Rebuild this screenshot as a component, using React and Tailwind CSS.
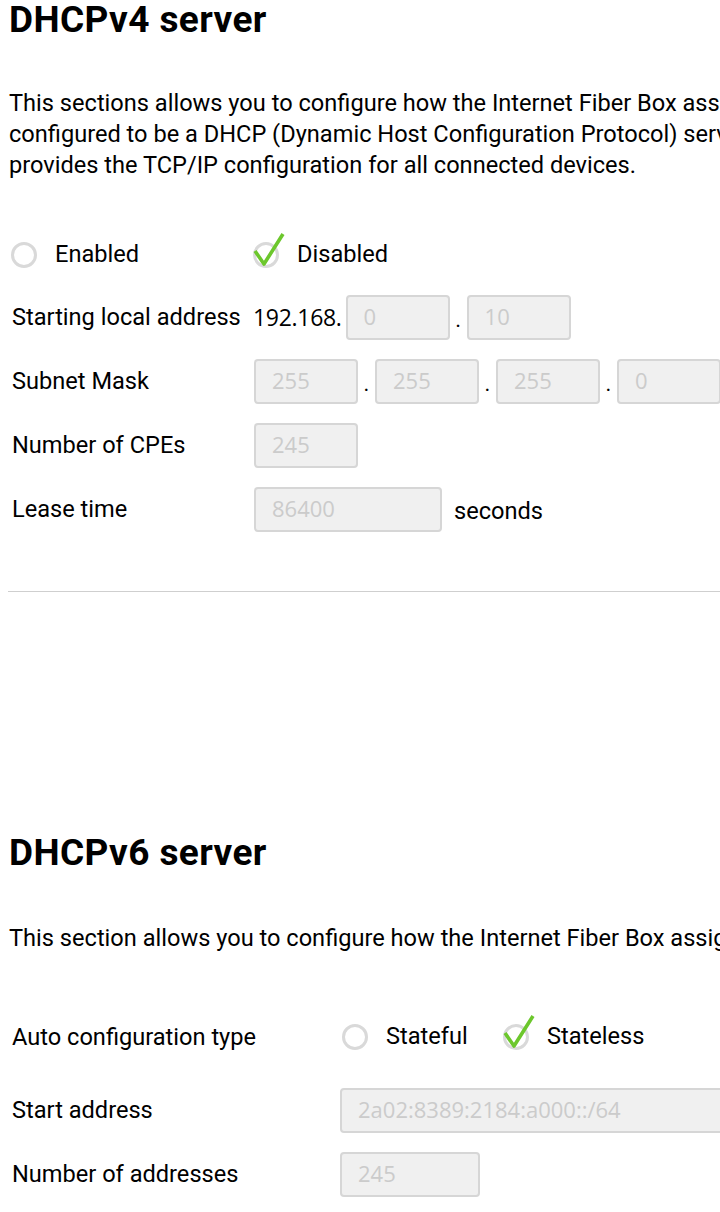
import React from 'react';

const Radio = ({ checked }) => (
  <svg width="32" height="48" viewBox="0 0 32 48" className="shrink-0 -my-[6px]">
    <circle cx="13" cy="24" r="11.5" fill="white" stroke="#d9d9d9" strokeWidth="3" />
    {checked && (
      <path d="M2 20 L11 33 L30 3" fill="none" stroke="#6cc72c" strokeWidth="3.6" strokeLinejoin="round" />
    )}
  </svg>
);

const Field = ({ value, w = 'w-[104px]' }) => (
  <div className={`${w} h-[45px] shrink-0 rounded-[4px] border-2 border-[#d6d6d6] bg-[#f0f0f0] pl-[16px] pb-[2px] flex items-center text-[22px] text-[#cbcbcb] font-['Open_Sans',sans-serif]`}>
    {value}
  </div>
);

const Dot = () => <span className="w-[17px] text-center text-[22px] self-end pb-[4px] text-black">.</span>;

const Row = ({ label, labelW = 'w-[242px]', children }) => (
  <div className="flex items-center h-[45px] whitespace-nowrap">
    <div className={`${labelW} pl-[12px] shrink-0 text-[23.6px] text-black`}>{label}</div>
    <div className="flex items-center">{children}</div>
  </div>
);

export default function App() {
  return (
    <div className="w-[720px] h-[1212px] overflow-hidden bg-white font-['Roboto',sans-serif] text-black">
      <div className="w-[1200px]">
        {/* DHCPv4 */}
        <h1 className="-mt-[2px] pl-[9px] text-[37px] font-bold leading-[44px] tracking-[0.4px]">DHCPv4 server</h1>
        <p className="mt-[46px] pl-[9px] text-[23.6px] leading-[31px] whitespace-nowrap">
          This sections allows you to configure how the Internet Fiber Box assigns IP addresses to connected devices. When<br />
          configured to be a DHCP (Dynamic Host Configuration Protocol) server, the Internet Fiber Box automatically<br />
          provides the TCP/IP configuration for all connected devices.
        </p>

        <div className="mt-[56px] flex items-center h-[36px] text-[23.6px]">
          <div className="pl-[11px] flex items-center w-[253px]">
            <Radio />
            <span className="ml-[12px]">Enabled</span>
          </div>
          <div className="flex items-center">
            <Radio checked />
            <span className="ml-[12px]">Disabled</span>
          </div>
        </div>

        <div className="mt-[22px] flex flex-col gap-[19px]">
          <Row label="Starting local address" labelW="w-[253px]">
            <span className="text-[23px] mr-[4px] font-['Open_Sans',sans-serif] tracking-[-0.3px]">192.168.</span>
            <Field value="0" />
            <Dot />
            <Field value="10" />
          </Row>
          <Row label="Subnet Mask" labelW="w-[254px]">
            <Field value="255" />
            <Dot />
            <Field value="255" />
            <Dot />
            <Field value="255" />
            <Dot />
            <Field value="0" />
          </Row>
          <Row label="Number of CPEs" labelW="w-[254px]">
            <Field value="245" />
          </Row>
          <Row label="Lease time" labelW="w-[254px]">
            <Field value="86400" w="w-[188px]" />
            <span className="ml-[12px] text-[23.6px] pt-[4px]">seconds</span>
          </Row>
        </div>

        <div className="ml-[8px] mt-[59px] border-t border-[#cfcfcf]" />

        {/* DHCPv6 */}
        <h1 className="mt-[239px] pl-[9px] text-[37px] font-bold leading-[44px] tracking-[0.4px]">DHCPv6 server</h1>
        <p className="mt-[48px] pl-[9px] text-[23.6px] leading-[31px] whitespace-nowrap">
          This section allows you to configure how the Internet Fiber Box assigns IPv6 addresses to connected devices.
        </p>

        <div className="mt-[61px] flex items-center h-[45px] text-[23.6px] whitespace-nowrap">
          <div className="w-[342px] pl-[12px] shrink-0">Auto configuration type</div>
          <div className="flex items-center w-[161px] -mt-[2px]">
            <Radio />
            <span className="ml-[12px]">Stateful</span>
          </div>
          <div className="flex items-center -mt-[2px]">
            <Radio checked />
            <span className="ml-[12px]">Stateless</span>
          </div>
        </div>
        <div className="mt-[28px] flex flex-col gap-[19px]">
          <Row label="Start address" labelW="w-[340px]">
            <Field value="2a02:8389:2184:a000::/64" w="w-[440px]" />
          </Row>
          <Row label="Number of addresses" labelW="w-[340px]">
            <Field value="245" w="w-[140px]" />
          </Row>
        </div>
      </div>
    </div>
  );
}
